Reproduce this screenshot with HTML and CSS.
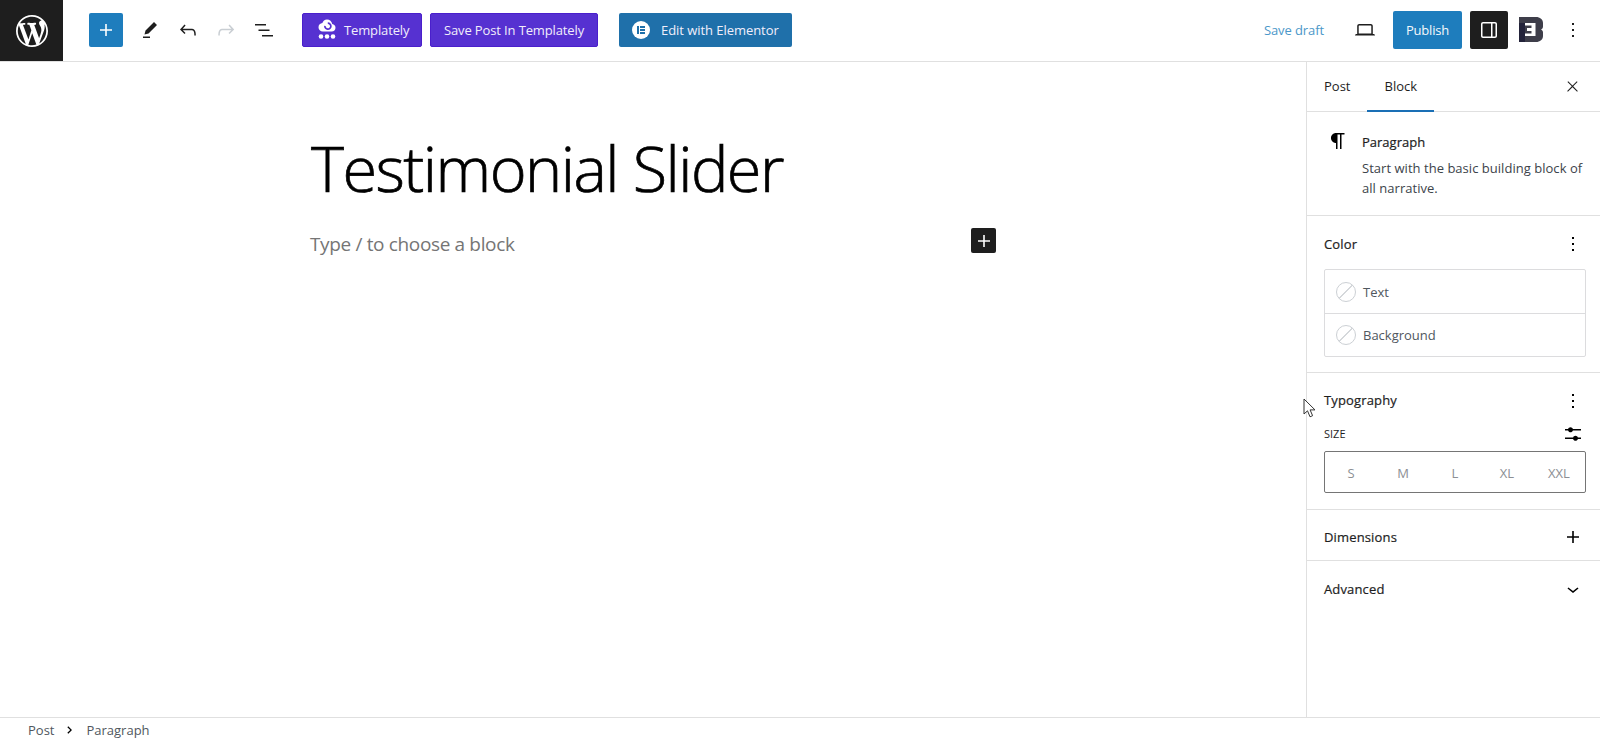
FILE: index.html
```html
<!DOCTYPE html>
<html lang="en">
<head>
  <meta charset="UTF-8" />
  <title>Testimonial Slider</title>
  <link rel="stylesheet" href="styles.css">
</head>
<body>
  <header class="topbar">
    <a class="wp-logo">
      <svg viewBox="0 0 20 20" width="32" height="32"><path fill="#fff" d="M20 10c0-5.51-4.49-10-10-10C4.48 0 0 4.49 0 10c0 5.52 4.48 10 10 10 5.51 0 10-4.48 10-10zM7.78 15.37L4.37 6.22c.55-.02 1.17-.08 1.17-.08.5-.06.44-1.13-.06-1.11 0 0-1.45.11-2.37.11-.18 0-.37 0-.58-.01C4.12 2.69 6.87 1.11 10 1.11c2.33 0 4.45.87 6.05 2.34-.68-.11-1.65.39-1.65 1.58 0 .74.45 1.36.9 2.1.35.61.55 1.36.55 2.46 0 1.49-1.4 5-1.4 5l-3.03-8.37c.54-.02.82-.17.82-.17.5-.05.44-1.25-.06-1.22 0 0-1.44.12-2.38.12-.87 0-2.33-.12-2.33-.12-.5-.03-.56 1.2-.06 1.22l.92.08 1.26 3.41zM17.41 10c.24-.64.74-1.87.43-4.25.7 1.29 1.05 2.71 1.05 4.25 0 3.29-1.73 6.24-4.4 7.78.97-2.59 1.94-5.2 2.92-7.78zM6.1 18.09C3.12 16.65 1.11 13.53 1.11 10c0-1.3.23-2.48.72-3.59C3.25 10.3 4.67 14.2 6.1 18.09zm4.03-6.63l2.58 6.98c-.86.29-1.76.45-2.71.45-.79 0-1.57-.11-2.29-.33.81-2.38 1.62-4.74 2.42-7.1z"/></svg>
    </a>

    <div class="tools">
      <button class="add-btn"><svg viewBox="0 0 24 24" width="24" height="24"><path fill="#fff" d="M18 11.2h-5.2V6h-1.6v5.2H6v1.6h5.2V18h1.6v-5.2H18z"/></svg></button>
      <div class="icon-row">
        <button class="icon-btn"><svg viewBox="0 0 24 24" width="24" height="24"><path d="m19 7-3-3-8.5 8.5-1 4 4-1L19 7Zm-7 11.5H5V20h7v-1.5Z"/></svg></button>
        <button class="icon-btn"><svg viewBox="0 0 24 24" width="24" height="24"><path d="M18.3 11.7c-.6-.6-1.4-.9-2.3-.9H6.7l2.9-3.3-1.1-1-4.5 5L8.5 16l1-1-2.7-2.7H16c.5 0 .9.2 1.3.5 1 1 1 3.4 1 4.5v.3h1.5v-.2c0-1.5 0-4.3-1.5-5.7z"/></svg></button>
        <button class="icon-btn is-disabled"><svg viewBox="0 0 24 24" width="24" height="24"><path d="M15.6 6.5l-1.1 1 2.9 3.3H8c-.9 0-1.7.3-2.3.9-1.4 1.5-1.4 4.2-1.4 5.6v.2h1.5v-.3c0-1.1 0-3.5 1-4.5.3-.3.7-.5 1.3-.5h9.2L14.5 15l1.1 1.1 4.6-4.6-4.6-5z"/></svg></button>
        <button class="icon-btn"><svg viewBox="0 0 24 24" width="24" height="24"><path d="M3 6h11v1.5H3V6Zm3.5 5.5h11V13h-11v-1.5ZM21 17H10v1.5h11V17Z"/></svg></button>
      </div>
      <button class="btn btn-purple btn-templately">
        <svg viewBox="0 0 24 24" width="24" height="24"><path fill="#fff" d="M12 1.500c-2.300 0-4.100 1.500-4.600 3.600C5.300 5.300 3.500 7 3.500 9.300c0 2.400 1.900 4.200 4.300 4.200h9c2.100 0 3.700-1.600 3.700-3.700 0-1.900-1.400-3.500-3.300-3.700C16.800 3.500 14.700 1.500 12 1.500z"/><path fill="none" stroke="#5631d1" stroke-width="1.700" d="M12.800 5.200a3 3 0 1 1-2.900 2.600"/><circle fill="#fff" cx="6" cy="18.500" r="2.300"/><circle fill="#fff" cx="12" cy="18.500" r="2.300"/><circle fill="#fff" cx="18" cy="18.500" r="2.300"/></svg>
        Templately
      </button>
      <button class="btn btn-purple btn-save">Save Post In Templately</button>
      <button class="btn btn-elementor">
        <span class="el-icon"><i></i><b></b></span>
        Edit with Elementor
      </button>
    </div>

    <div class="actions">
      <a class="save-draft">Save draft</a>
      <button class="icon-btn preview"><svg viewBox="0 0 24 24" width="24" height="24"><path d="M20.500 16h-.7V8c0-1.100-.9-2-2-2H6.200c-1.100 0-2 .9-2 2v8h-.7c-.8 0-1.500.7-1.500 1.500h20c0-.8-.7-1.500-1.500-1.500zM5.700 8c0-.3.2-.5.5-.5h11.600c.3 0 .5.2.5.5v7.600H5.700V8z"/></svg></button>
      <button class="publish">Publish</button>
      <button class="sidebar-toggle"><svg viewBox="0 0 24 24" width="24" height="24"><path fill="#fff" d="M18 4H6c-1.100 0-2 .9-2 2v12c0 1.100.9 2 2 2h12c1.100 0 2-.9 2-2V6c0-1.100-.9-2-2-2zm-4 14.500H6c-.3 0-.5-.2-.5-.5V6c0-.3.2-.5.5-.5h8v13zm4.500-.5c0 .3-.2.5-.5.5h-2.500v-13H18c.3 0 .5.2.5.5v12z"/></svg></button>
      <svg class="e-logo" viewBox="0 0 24 25" width="24" height="25"><path fill="#3e3e4a" d="M0 0h17c4 0 7 2.500 7 6v3.500c0 1.500-.8 2.500-2 3 1.200.5 2 1.500 2 3V19c0 3.500-3 6-7 6H0z"/><path fill="#23233a" d="M0 6h6v19H0z"/><path fill="#fff" d="M6 6h10.500v13H6v-2.500h6.500V14H8v-3h4.500V8.500H6z"/></svg>
      <button class="icon-btn more"><svg viewBox="0 0 24 24" width="24" height="24"><path d="M13 19h-2v-2h2v2zm0-6h-2v-2h2v2zm0-6h-2V5h2v2z"/></svg></button>
    </div>
  </header>

  <div class="layout">
    <main class="editor">
      <div class="canvas">
        <h1 class="post-title">Testimonial Slider</h1>
        <div class="block-row">
          <p class="placeholder">Type / to choose a block</p>
          <button class="inserter"><svg viewBox="0 0 24 24" width="24" height="24"><path fill="#fff" d="M18 11.200h-5.200V6h-1.600v5.200H6v1.600h5.200V18h1.600v-5.200H18z"/></svg></button>
        </div>
      </div>
    </main>

    <aside class="sidebar">
      <div class="tabs">
        <span class="tab">Post</span>
        <span class="tab is-active">Block</span>
        <button class="icon-btn close"><svg viewBox="0 0 24 24" width="17" height="17"><path d="M13 11.800l6.100-6.300-1-1-6.100 6.200-6.100-6.200-1 1 6.100 6.300-6.500 6.700 1 1 6.500-6.600 6.500 6.600 1-1z"/></svg></button>
      </div>

      <section class="block-card">
        <svg viewBox="0 0 24 24" width="24" height="24"><path d="m9.996 14v-.225l.004 0v6.225h1.500v-14.500h2.500v14.500h1.500v-14.500h3v-1.500h-8.504c-2.761 0-5 2.239-5 5 0 2.761 2.239 5 5 5z"/></svg>
        <div>
          <h2>Paragraph</h2>
          <p>Start with the basic building block of all narrative.</p>
        </div>
      </section>

      <section class="panel panel-color">
        <div class="panel-head">
          <h3>Color</h3>
          <svg viewBox="0 0 24 24" width="24" height="24"><path d="M13 19h-2v-2h2v2zm0-6h-2v-2h2v2zm0-6h-2V5h2v2z"/></svg>
        </div>
        <div class="color-list">
          <div class="color-item"><span class="swatch"></span>Text</div>
          <div class="color-item"><span class="swatch"></span>Background</div>
        </div>
      </section>

      <section class="panel panel-type">
        <div class="panel-head">
          <h3>Typography</h3>
          <svg viewBox="0 0 24 24" width="24" height="24"><path d="M13 19h-2v-2h2v2zm0-6h-2v-2h2v2zm0-6h-2V5h2v2z"/></svg>
        </div>
        <div class="size-head">
          <span>SIZE</span>
          <svg viewBox="0 0 24 24" width="24" height="24"><path d="M14.500 13.800c-1.100 0-2.100.7-2.400 1.800H4V17h8.100c.3 1 1.300 1.800 2.400 1.800s2.100-.7 2.400-1.800H20v-1.500h-3.100c-.3-1-1.300-1.700-2.400-1.700zM11.900 7c-.3-1-1.300-1.800-2.400-1.800S7.400 6 7.100 7H4v1.500h3.100c.3 1 1.300 1.800 2.400 1.800s2.100-.7 2.400-1.800H20V7h-8.100z"/></svg>
        </div>
        <div class="size-box">
          <span>S</span><span>M</span><span>L</span><span>XL</span><span>XXL</span>
        </div>
      </section>

      <section class="panel-row">
        <h3>Dimensions</h3>
        <svg viewBox="0 0 24 24" width="24" height="24"><path d="M18 11.200h-5.200V6h-1.600v5.200H6v1.600h5.200V18h1.600v-5.200H18z"/></svg>
      </section>
      <section class="panel-row no-border">
        <h3>Advanced</h3>
        <svg viewBox="0 0 24 24" width="24" height="24"><path d="M17.500 11.600L12 16l-5.500-4.400.9-1.200L12 14l4.500-3.600 1 1.200z"/></svg>
      </section>
    </aside>
  </div>

  <footer class="crumbs">
    <span>Post</span>
    <svg viewBox="0 0 24 24" width="12" height="12"><path d="M8.500 4.500 16 12l-7.500 7.500-1.800-1.800L12.400 12 6.700 6.300z"/></svg>
    <span>Paragraph</span>
  </footer>

  <svg class="cursor" viewBox="0 0 13 21" width="13" height="21"><path fill="#fff" stroke="#333" stroke-width="1" d="M1 1v15l3.500-3.200 2.500 6 2.600-1.100-2.500-5.800H12z"/></svg>
</body>
</html>
```

FILE: styles.css
```css
* { box-sizing: border-box; margin: 0; padding: 0; }

body {
  background: #fff;
  color: #1e1e1e;
  font-family: "Open Sans", sans-serif;
  font-size: 13px;
  height: 100vh;
  display: flex;
  flex-direction: column;
  overflow: hidden;
}

button {
  border: none;
  background: none;
  font: inherit;
  letter-spacing: inherit;
  color: inherit;
  cursor: pointer;
}

svg { display: block; flex: none; }

/* top bar */
.topbar {
  display: flex;
  align-items: center;
  height: 62px;
  flex: none;
  border-bottom: 1px solid #e0e0e0;
}

.wp-logo {
  width: 63px;
  height: 61px;
  background: #1e1e1e;
  display: flex;
  align-items: center;
  justify-content: center;
}

.tools {
  display: flex;
  align-items: center;
  margin: -2px 0 0 26px;
}

.add-btn {
  width: 34px;
  height: 34px;
  background: #1e7dbd;
  border-radius: 2px;
  display: flex;
  align-items: center;
  justify-content: center;
}

.icon-row {
  display: flex;
  margin: 0 19px 0 8px;
}

.icon-btn {
  width: 38px;
  height: 38px;
  display: flex;
  align-items: center;
  justify-content: center;
}

.icon-btn path { fill: #1e1e1e; }
.is-disabled path { fill: #c9ced3; }

.btn {
  height: 34px;
  border-radius: 2px;
  color: #f1eefb;
  display: flex;
  align-items: center;
  letter-spacing: -0.13px;
}

.btn-purple {
  background: #5631d1;
  border: 1px solid #4a1fcc;
}

.btn-templately {
  width: 120px;
  padding-left: 12px;
  gap: 5px;
  margin-right: 8px;
}

.btn-save {
  width: 168px;
  justify-content: center;
  margin-right: 21px;
}

.btn-elementor {
  width: 173px;
  background: #1f70aa;
  padding-left: 13px;
  gap: 11px;
  letter-spacing: -0.05px;
}

.el-icon {
  width: 18px;
  height: 18px;
  border-radius: 50%;
  background: #fff;
  display: flex;
  align-items: center;
  justify-content: center;
  gap: 1px;
}

.el-icon i {
  width: 2px;
  height: 8px;
  background: #1f70aa;
}

.el-icon b {
  width: 5px;
  height: 8px;
  background: repeating-linear-gradient(#1f70aa 0 2px, #fff 2px 3px);
}

.actions {
  display: flex;
  align-items: center;
  margin: -2px 0 0 auto;
}

.save-draft {
  color: #4b97c9;
  margin-right: 22px;
  letter-spacing: -0.1px;
}

.publish {
  width: 69px;
  height: 38px;
  background: #1e7dbd;
  color: #f4f8fb;
  border-radius: 2px;
  margin-left: 9px;
  letter-spacing: -0.2px;
}

.sidebar-toggle {
  width: 38px;
  height: 38px;
  background: #1e1e1e;
  border-radius: 2px;
  margin-left: 8px;
  display: flex;
  align-items: center;
  justify-content: center;
}

.e-logo { margin-left: 11px; }
.more { margin-left: 11px; margin-right: 8px; }

/* main area */
.layout {
  flex: 1;
  display: flex;
  min-height: 0;
}

.editor { flex: 1; }

.canvas {
  width: 686px;
  margin-left: 310px;
  padding-top: 63px;
}

.post-title {
  font-size: 63px;
  font-weight: 300;
  line-height: 86px;
  letter-spacing: -1.55px;
  padding-left: 1px;
  color: #000;
  -webkit-text-stroke: 0.7px #000;
}

.block-row {
  display: flex;
  align-items: center;
  justify-content: space-between;
  margin-top: 17px;
}

.placeholder {
  font-size: 19px;
  letter-spacing: -0.35px;
  color: #757575;
}

.inserter {
  width: 25px;
  height: 25px;
  background: #1e1e1e;
  border-radius: 2px;
  margin-bottom: 6px;
  display: flex;
  align-items: center;
  justify-content: center;
}

/* sidebar */
.sidebar {
  width: 294px;
  flex: none;
  border-left: 1px solid #e0e0e0;
}

.tabs {
  display: flex;
  height: 50px;
  padding-left: 17px;
  align-items: center;
  border-bottom: 1px solid #e0e0e0;
}

.tab {
  height: 50px;
  line-height: 49px;
  margin-right: 33px;
  color: #1e1e1e;
}

.tab.is-active {
  margin-left: -16px;
  padding: 0 17px;
  width: 67px;
  border-bottom: 2px solid #1a6fb5;
}

.close { margin-left: auto; margin-right: 9px; }

.block-card {
  display: flex;
  gap: 12px;
  height: 104px;
  padding: 17px 10px 0 19px;
  border-bottom: 1px solid #e0e0e0;
}

.block-card h2 {
  font-size: 13px;
  font-weight: 500;
  line-height: 26px;
  -webkit-text-stroke: 0.2px;
}

.block-card p {
  color: #3c434a;
  line-height: 20px;
  margin-top: 3px;
  letter-spacing: 0.03px;
}

.panel, .panel-row {
  border-bottom: 1px solid #e0e0e0;
  padding: 0 15px 0 17px;
}

.panel-color { height: 157px; }
.panel-type { height: 137px; }

.panel-head {
  display: flex;
  justify-content: space-between;
  align-items: center;
  height: 56px;
}

.panel-type h3 { margin-top: -2px; }

h3 {
  font-size: 13px;
  font-weight: 500;
  letter-spacing: 0.15px;
  -webkit-text-stroke: 0.2px;
}

.color-list {
  width: 262px;
  margin-top: -3px;
  border: 1px solid #dcdcde;
  border-radius: 2px;
}

.color-item {
  height: 43px;
  display: flex;
  align-items: center;
  gap: 7px;
  padding-left: 11px;
  color: #50575e;
}

.color-item + .color-item { border-top: 1px solid #dcdcde; }

.swatch {
  width: 20px;
  height: 20px;
  border-radius: 50%;
  border: 1px solid #ccd0d4;
  background: linear-gradient(-45deg, transparent 48%, #d5d8db 48%, #d5d8db 53%, transparent 53%);
}

.size-head {
  display: flex;
  justify-content: space-between;
  align-items: center;
  height: 24px;
  margin-top: -7px;
  font-size: 11px;
  font-weight: 500;
}

.size-head span { margin-top: -2px; }

.size-box {
  width: 262px;
  height: 42px;
  margin-top: 5px;
  padding-top: 1px;
  border: 1px solid #757575;
  border-radius: 2px;
  display: grid;
  grid-template-columns: repeat(5, 1fr);
  align-items: center;
  justify-items: center;
  color: #8c8f94;
}

.panel-row {
  display: flex;
  justify-content: space-between;
  align-items: center;
  height: 51px;
  padding-top: 4px;
}

.no-border { border-bottom: none; }

/* breadcrumb */
.crumbs {
  height: 24px;
  flex: none;
  border-top: 1px solid #e0e0e0;
  display: flex;
  align-items: center;
  padding-left: 28px;
  gap: 10px;
  color: #50575e;
}

/* mouse pointer in the capture */
.cursor {
  position: absolute;
  left: 1303px;
  top: 398px;
}
```
